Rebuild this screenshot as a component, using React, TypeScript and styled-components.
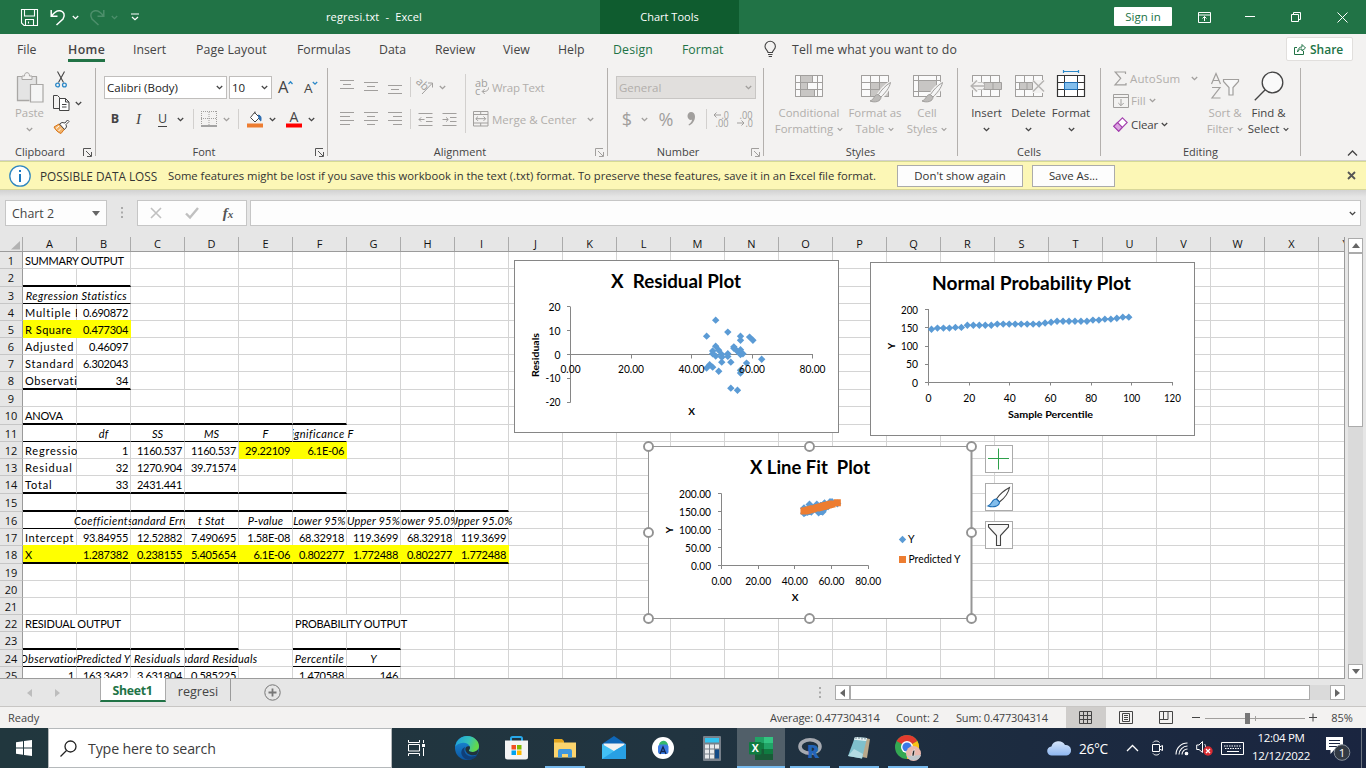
import React from 'react';
import styled, { createGlobalStyle, css } from 'styled-components';

const UI = `'Open Sans', 'Noto Sans', sans-serif`;
const CELL = `'Lato', 'Open Sans', sans-serif`;

const Global = createGlobalStyle`
  html, body { margin: 0; padding: 0; overflow: hidden; }
  * { box-sizing: border-box; }
  svg { display: block; flex: none; overflow: visible; }
`;

const Window = styled.div`
  width: 1366px;
  height: 768px;
  display: flex;
  flex-direction: column;
  background: #e6e6e6;
  font-family: ${UI};
  font-size: 11px;
  color: #444;
  white-space: nowrap;
  overflow: hidden;
  cursor: default;
`;

const Slot = styled.div<{ $w: number; $ml?: number; $h?: number }>`
  width: ${(p) => p.$w}px;
  height: ${(p) => (p.$h ? `${p.$h}px` : 'auto')};
  margin-left: ${(p) => p.$ml ?? 0}px;
  flex: none;
  display: flex;
  align-items: center;
  justify-content: center;
`;

const Spacer = styled.div`
  flex: 1;
`;

/* ---------- title bar ---------- */

const TitleBar = styled.header`
  height: 34px;
  flex: none;
  display: flex;
  background: #217346;
  color: #fff;
`;

const DocTitle = styled.div`
  width: 452px;
  display: flex;
  align-items: center;
  justify-content: center;
  font-size: 11px;
  letter-spacing: 0.15px;
  white-space: pre;
  padding-bottom: 2px;
`;

const ContextTitle = styled.div`
  width: 139px;
  display: flex;
  align-items: center;
  justify-content: center;
  background: #0f5c2f;
  letter-spacing: 0;
  padding-bottom: 2px;
`;

const SignIn = styled.button`
  width: 58px;
  height: 19px;
  margin: 7px 9px 0 0;
  padding: 0;
  border: 0;
  border-radius: 1px;
  background: #fff;
  color: #217346;
  font: 11.5px/19px ${UI};
`;

/* ---------- tabs ---------- */

const TabRow = styled.nav`
  height: 32px;
  flex: none;
  display: flex;
  background: #f3f2f1;
  padding-left: 17px;
  font-size: 12.3px;
`;

const Tab = styled.div<{ $w: number; $ls?: number; $active?: boolean; $green?: boolean }>`
  width: ${(p) => p.$w}px;
  flex: none;
  line-height: 31px;
  letter-spacing: ${(p) => p.$ls ?? 0}px;
  color: ${(p) => (p.$green ? '#217346' : '#444')};
  font-weight: ${(p) => (p.$active ? 600 : 400)};
  span {
    display: inline-block;
    height: 28px;
    border-bottom: ${(p) => (p.$active ? '3px solid #217346' : '0')};
  }
`;

const BulbSlot = styled.div`
  width: 28px;
  padding-top: 7px;
  flex: none;
`;

const ShareButton = styled.div`
  width: 67px;
  height: 24px;
  margin: 3px 13px 0 0;
  display: flex;
  align-items: center;
  gap: 4px;
  padding-left: 7px;
  background: #fff;
  border: 1px solid #e1dfdd;
  border-radius: 2px;
  color: #217346;
  font-size: 12px;
  font-weight: 600;
`;

/* ---------- ribbon ---------- */

const Ribbon = styled.section`
  height: 95px;
  flex: none;
  display: flex;
  background: #f3f2f1;
  border-bottom: 1px solid #d2d0ce;
  padding-top: 2px;
`;

const GroupBox = styled.div<{ $w: number }>`
  width: ${(p) => p.$w}px;
  height: 88px;
  flex: none;
  display: flex;
  flex-direction: column;
  border-right: 1px solid #b3b0ad;
`;

const GroupBody = styled.div`
  height: 76px;
  flex: none;
  display: flex;
`;

const GroupFoot = styled.div`
  height: 16px;
  display: flex;
  align-items: center;
`;

const GroupName = styled.div`
  flex: 1;
  text-align: center;
  line-height: 16px;
`;

const Collapse = styled.div`
  width: 22px;
  margin-left: 40px;
  padding-bottom: 4px;
  display: flex;
  align-items: flex-end;
  justify-content: center;
`;

const Column = styled.div<{ $w?: number; $pt?: number }>`
  display: flex;
  flex-direction: column;
  flex: none;
  width: ${(p) => (p.$w ? `${p.$w}px` : 'auto')};
  padding-top: ${(p) => p.$pt ?? 0}px;
`;

const ToolRow = styled.div<{ $h: number; $pl?: number }>`
  height: ${(p) => p.$h}px;
  padding-left: ${(p) => p.$pl ?? 0}px;
  flex: none;
  display: flex;
  align-items: center;
`;

const BigButton = styled.div<{ $w: number; $off?: boolean; $ml?: number }>`
  width: ${(p) => p.$w}px;
  margin-left: ${(p) => p.$ml ?? 0}px;
  flex: none;
  display: flex;
  flex-direction: column;
  align-items: center;
  padding-top: 2px;
  color: ${(p) => (p.$off ? '#b1aeab' : '#444')};
  font-size: 11.4px;
`;

const BigIcon = styled.div<{ $pt?: number }>`
  height: 35px;
  padding-top: ${(p) => p.$pt ?? 0}px;
  display: flex;
  align-items: flex-start;
`;

const BigLine = styled.div`
  height: 16px;
  line-height: 16px;
  display: flex;
  align-items: center;
  gap: 4px;
`;

const Combo = styled.div<{ $w: number; $off?: boolean }>`
  width: ${(p) => p.$w}px;
  height: 23px;
  flex: none;
  display: flex;
  align-items: center;
  justify-content: space-between;
  padding: 0 3px 1px 2px;
  background: ${(p) => (p.$off ? '#e1dfdd' : '#fff')};
  border: 1px solid ${(p) => (p.$off ? '#c8c6c4' : '#c0bebc')};
  color: ${(p) => (p.$off ? '#b1aeab' : '#222')};
  font-size: 11.5px;
`;

const VRule = styled.div<{ $h: number }>`
  width: 1px;
  height: ${(p) => p.$h}px;
  flex: none;
  background: #d2d0ce;
`;

const Glyph = styled.span<{ $b?: boolean; $i?: boolean; $u?: boolean; $size?: number; $off?: boolean }>`
  font-size: ${(p) => p.$size ?? 13}px;
  line-height: ${(p) => (p.$u ? 14 : 16)}px;
  font-weight: ${(p) => (p.$b ? 700 : 400)};
  font-family: ${(p) => (p.$i ? `'Liberation Serif', serif` : UI)};
  font-style: ${(p) => (p.$i ? 'italic' : 'normal')};
  border-bottom: ${(p) => (p.$u ? '1px solid #444' : '0')};
  color: ${(p) => (p.$off ? '#a19f9d' : '#444')};
`;

const ToolText = styled.span<{ $off?: boolean; $ls?: number; $w?: number }>`
  color: ${(p) => (p.$off ? '#b1aeab' : '#444')};
  font-size: 11.5px;
  letter-spacing: ${(p) => p.$ls ?? 0}px;
  width: ${(p) => (p.$w ? `${p.$w}px` : 'auto')};
  flex: none;
`;

/* ---------- message bar ---------- */

const MessageBar = styled.div`
  height: 29px;
  flex: none;
  display: flex;
  align-items: center;
  background: #fcf7b6;
  border-top: 1px solid #d6da94;
  border-bottom: 1px solid #d8d79a;
  font-size: 11.25px;
  color: #333;
`;

const MessageTitle = styled.div`
  width: 128px;
  margin-left: 8px;
  font-size: 11.8px;
`;

const MessageText = styled.div`
  width: 729px;
`;

const MessageButton = styled.div<{ $w: number }>`
  width: ${(p) => p.$w}px;
  height: 22px;
  margin-right: ${(p) => (p.$w > 100 ? 9 : 0)}px;
  border: 1px solid #ababab;
  background: #fdfdfd;
  text-align: center;
  line-height: 20px;
  font-size: 11.4px;
`;

/* ---------- formula bar ---------- */

const FormulaRow = styled.div`
  height: 47px;
  flex: none;
  display: flex;
  padding: 10px 5px 0;
  background: linear-gradient(#d2d2d2, #e6e6e6 7px);
`;

const NameBox = styled.div`
  width: 102px;
  height: 26px;
  display: flex;
  align-items: center;
  justify-content: space-between;
  padding: 0 6px;
  background: #fdfdfd;
  border: 1px solid #c6c6c6;
  font-size: 12.4px;
`;

const FormulaButtons = styled.div`
  width: 110px;
  height: 26px;
  display: flex;
  align-items: center;
  background: #fdfdfd;
  border: 1px solid #c6c6c6;
`;

const FormulaInput = styled.div`
  width: 1111px;
  height: 26px;
  margin-left: 3px;
  display: flex;
  align-items: center;
  justify-content: flex-end;
  padding-right: 3px;
  background: #fdfdfd;
  border: 1px solid #c6c6c6;
`;

const FxMark = styled.span`
  font: italic 700 15px/20px 'Liberation Serif', serif;
  color: #555;
  small { font-size: 11px; }
`;

/* ---------- sheet ---------- */

const SheetArea = styled.main`
  height: 442px;
  flex: none;
  display: flex;
`;

const GridPane = styled.div`
  position: relative;
  width: 1345px;
  height: 442px;
  flex: none;
  overflow: hidden;
  background: #fff;
  border-right: 1px solid #9b9b9b;
  border-bottom: 1px solid #9b9b9b;
  font-family: ${CELL};
`;

const HeadRow = styled.div`
  height: 15px;
  display: flex;
  background: #e6e6e6;
  border-bottom: 1px solid #9b9b9b;
`;

const Corner = styled.div`
  width: 23px;
  height: 14px;
  flex: none;
  border-right: 1px solid #ababab;
  padding: 4px 0 0 11px;
`;

const ColHead = styled.div`
  width: 54px;
  flex: none;
  border-right: 1px solid #ababab;
  color: #111;
  font: 11px/14px ${UI};
  text-align: center;
`;

const SheetRow = styled.div<{ $h: number }>`
  height: ${(p) => p.$h}px;
  display: flex;
`;

const RowHead = styled.div`
  width: 23px;
  flex: none;
  background: #e6e6e6;
  border-right: 1px solid #9b9b9b;
  border-bottom: 1px solid #c6c6c6;
  color: #111;
  font: 11px/18px ${UI};
  text-align: center;
`;

type Edge = 'thin' | 'thick' | undefined;
const CellBox = styled.div<{
  $span: number; $align: string; $edge: Edge; $fill?: boolean; $bleedUp?: boolean; $it?: boolean; $open?: string; $ls: number;
}>`
  width: ${(p) => p.$span * 54}px;
  flex: none;
  display: flex;
  justify-content: ${(p) => p.$align};
  padding: 0 2px;
  border-right: 1px solid ${(p) => (p.$fill ? '#ff0' : p.$open === 'right' ? 'transparent' : '#d4d4d4')};
  border-bottom: ${(p) =>
    p.$edge === 'thick' ? '2px solid #000' : p.$edge === 'thin' ? '1px solid #000' : p.$fill ? '1px solid #ff0' : '1px solid #d4d4d4'};
  background: ${(p) => (p.$fill ? '#ff0' : 'transparent')};
  ${(p) => p.$fill && p.$bleedUp && css`box-shadow: 0 -1px 0 #ff0;`}
  color: #000;
  font-size: 11px;
  line-height: 18px;
  font-style: ${(p) => (p.$it ? 'italic' : 'normal')};
  letter-spacing: ${(p) => p.$ls}px;
  clip-path: inset(-1px ${(p) => (p.$open === 'right' ? '-40px' : '0')} 0 ${(p) => (p.$open === 'left' ? '-40px' : '0')});
`;

const VScroll = styled.div`
  width: 15px;
  height: 442px;
  margin-left: 3px;
  padding-top: 1px;
  display: flex;
  flex-direction: column;
`;

const ScrollButton = styled.div`
  width: 15px;
  height: 15px;
  flex: none;
  display: flex;
  align-items: center;
  justify-content: center;
  background: #fff;
  border: 1px solid #ababab;
`;

const VThumb = styled.div`
  height: 174px;
  background: #fff;
  border: 1px solid #ababab;
`;

const Track = styled.div`
  flex: 1;
  background: #dadada;
`;

/* Charts float freely over the cells, as in any spreadsheet. */
const ChartFrame = styled.div<{ $x: number; $y: number }>`
  position: absolute;
  left: ${(p) => p.$x}px;
  top: ${(p) => p.$y}px;
`;

const ChartLabel = styled.text`
  font-family: ${CELL};
  fill: #000;
  white-space: pre;
`;

const ChartButtons = styled.div`
  position: absolute;
  left: 985px;
  top: 208px;
  display: flex;
  flex-direction: column;
  gap: 10px;
`;

const ChartButton = styled.div`
  width: 28px;
  height: 28px;
  display: flex;
  align-items: center;
  justify-content: center;
  background: #fff;
  border: 1px solid #ababab;
`;

/* ---------- sheet tabs ---------- */

const SheetTabs = styled.div`
  height: 27px;
  flex: none;
  display: flex;
  background: #e6e6e6;
  font-size: 12px;
`;

const ActiveSheet = styled.div`
  width: 66px;
  height: 24px;
  margin-top: -1px;
  position: relative;
  background: #fff;
  border: 1px solid #ababab;
  border-top: 0;
  border-bottom: 2px solid #217346;
  color: #217346;
  font-weight: 700;
  font-size: 12.3px;
  letter-spacing: -0.3px;
  text-align: center;
  line-height: 26px;
  padding-right: 1px;
`;

const OtherSheet = styled.div`
  width: 65px;
  height: 22px;
  border-right: 1px solid #9b9b9b;
  text-align: center;
  font-size: 12.6px;
  line-height: 25px;
`;

const HScroll = styled.div`
  display: flex;
  width: 510px;
  height: 15px;
  margin: 6px 21px 0 0;
`;

const HThumb = styled.div`
  width: 460px;
  background: #fff;
  border: 1px solid #ababab;
`;

/* ---------- status bar ---------- */

const StatusBar = styled.footer`
  height: 22px;
  flex: none;
  display: flex;
  align-items: center;
  background: #f3f2f1;
  border-top: 1px solid #c8c6c4;
  font-size: 11px;
`;

const StatusText = styled.div<{ $w: number; $ml?: number; $ls?: number }>`
  width: ${(p) => p.$w}px;
  margin-left: ${(p) => p.$ml ?? 0}px;
  flex: none;
  letter-spacing: ${(p) => p.$ls ?? -0.17}px;
`;

const ViewButton = styled.div<{ $on?: boolean }>`
  width: 40px;
  height: 21px;
  display: flex;
  align-items: center;
  justify-content: center;
  background: ${(p) => (p.$on ? '#cfcdcb' : 'transparent')};
`;

/* ---------- taskbar ---------- */

const Taskbar = styled.div`
  height: 40px;
  flex: none;
  display: flex;
  background: linear-gradient(90deg, #21373e 0%, #213440 50%, #1c2b40 75%, #1a2540 100%);
  color: #fff;
`;

const SearchBox = styled.div`
  width: 344px;
  height: 40px;
  display: flex;
  align-items: center;
  gap: 11px;
  padding-left: 11px;
  background: #fff;
  border: 1px solid #b5b9bb;
  color: #3c3c3c;
  font-size: 14.2px;
  letter-spacing: -0.15px;
`;

const TaskSlot = styled.div<{ $w: number; $open?: boolean; $active?: boolean }>`
  width: ${(p) => p.$w}px;
  height: 40px;
  flex: none;
  display: flex;
  align-items: center;
  justify-content: center;
  background: ${(p) => (p.$active ? '#515f69' : 'transparent')};
  box-shadow: ${(p) => (p.$active ? 'inset 0 -2px #76b9ed' : 'none')};
  ${(p) =>
    p.$open &&
    css`
      background: linear-gradient(#76b9ed, #76b9ed) center bottom / 40px 2px no-repeat;
    `}
`;

const Clock = styled.div`
  width: 62px;
  display: flex;
  flex-direction: column;
  align-items: center;
  font-size: 11.5px;
  line-height: 18px;
  padding-top: 1px;
  letter-spacing: -0.3px;
`;

const Temp = styled.div`
  width: 40px;
  margin-left: 8px;
  align-self: center;
  font-size: 13.7px;
  letter-spacing: -0.3px;
`;

/* ---------- icons ---------- */

const Chevron = ({ c = '#444', s = 7 }: { c?: string; s?: number }) => (
  <svg width={s} height={5} viewBox="0 0 7 5" fill="none" stroke={c} strokeWidth="1.3">
    <path d="M.8 1l2.7 2.6L6.2 1" />
  </svg>
);
const OFF = '#a19f9d';

const Launcher = ({ off }: { off?: boolean }) => (
  <svg width="9" height="9" fill="none" stroke={off ? OFF : '#555'}>
    <path d="M.5 8V.5H8M3 3l5 5M8.500 4v4.500H4" />
  </svg>
);

const SaveIcon = () => (
  <svg width="17" height="17" fill="none" stroke="#fff" strokeWidth="1.1">
    <path d="M.5.5h16v16H3l-2.500-2.500zM3.500.5v6.500h10V.5M4.500 16.500v-6h8v6M7.500 12.500v2" />
  </svg>
);
const UndoIcon = ({ c = '#fff', flip }: { c?: string; flip?: boolean }) => (
  <svg width="16" height="17" fill="none" stroke={c} strokeWidth="1.5">
    <path transform={flip ? 'matrix(-1 0 0 1 16 0)' : undefined} d="M1.200 1v6.300h6.300M1.500 7C4 3.500 7 1.200 10 1.700c4 .6 5.500 5 3 8.300L6.500 16" />
  </svg>
);

const PasteIcon = () => (
  <svg width="28" height="31" fill="none" stroke="#a9a7a5">
    <path d="M2 5h18v23H2z" fill="#e4e4e4" stroke="none" />
    <path d="M1.500 4.500v24h12M20.500 4.500V12" strokeWidth="1.300" />
    <path d="M1 4.500h5.500M15.500 4.500h5.500" />
    <path d="M6 7.500V4h2.500C8.500 1.500 9.500.7 11 .7s2.500.8 2.500 3.300H16v3.500z" fill="#f3f2f1" />
    <path d="M14.500 12.500h12.500v17.500h-12.500z" fill="#f5f5f5" strokeWidth="1.200" />
  </svg>
);
const CutIcon = () => (
  <svg width="12" height="17" fill="none" stroke="#444" strokeWidth="1.1">
    <path d="M2.500.5l6 11M9.500.5l-6 11" />
    <circle cx="2.600" cy="14" r="1.900" stroke="#2b88c8" strokeWidth="1.300" />
    <circle cx="9.400" cy="14" r="1.900" stroke="#2b88c8" strokeWidth="1.300" />
  </svg>
);
const CopyIcon = () => (
  <svg width="17" height="16" fill="#fff" stroke="#444">
    <path d="M.5.5h4l2 2v11h-6z" fill="#f3f2f1" />
    <path d="M6.500 3.500h6l3.500 3.500v8.500H6.500zM12.500 3.500V7H16M9 9.500h4.500M9 12h4.500" />
  </svg>
);
const PainterIcon = () => (
  <svg width="17" height="16" fill="none" stroke="#444">
    <path d="M1 8l5-3 5.500 5L8 14.500C5 13.500 2.500 11 1 8z" fill="#f2b36b" stroke="#d8761a" />
    <path d="M3 9.500L6 7M5.500 12L8 9.500" stroke="#fff" />
    <path d="M6.500 5L9 3.500l3 .5 2.500-3 1.500 1.500-3 3 .5 2.500-2 2.500z" fill="#fff" />
  </svg>
);

const GrowFont = ({ down }: { down?: boolean }) => (
  <svg width="16" height="16">
    <text x={down ? 1 : 0} y={13} fontFamily="Open Sans" fontSize={down ? 13.5 : 16.5} fill="#444">A</text>
    <path d={down ? 'M9.800 2l2.200 2.200L14.200 2' : 'M10.500 4l2-2.200L14.500 4'} fill="none" stroke="#2b88c8" strokeWidth="1.300" />
  </svg>
);
const BordersIcon = () => (
  <svg width="16" height="16" fill="none" stroke={OFF}>
    <path d="M.5 0v14M8 1v13M15.500 0v14M0 .5h16M0 7.500h16" strokeDasharray="1 1" />
    <path d="M0 15h16" strokeWidth="1.500" stroke="#888" />
  </svg>
);
const FillIcon = () => (
  <svg width="16" height="17" fill="none" stroke="#444">
    <path d="M7.500 1.500l5 5-4.500 4.500-4.500-4.500zM8 3V.5" fill="#fff" />
    <path d="M11.500 4c2.500.5 3 2.500 2.300 6-1.500-1-2-3-2.300-6z" fill="#2b6cb0" stroke="#2b6cb0" />
    <path d="M0 12.500h16v4H0z" fill="#ed7d31" stroke="none" />
  </svg>
);
const FontColorIcon = () => (
  <svg width="16" height="18">
    <text x="3.500" y="11.500" fontFamily="Open Sans" fontSize="14" fill="#444">A</text>
    <path d="M0 13.500h16v4H0z" fill="#f00" />
  </svg>
);

const Lines = ({ rows }: { rows: [number, number, number][] }) => (
  <svg width="15" height="14" stroke={OFF}>
    {rows.map(([x1, x2, y]) => (
      <path key={y} d={`M${x1} ${y + 0.5}H${x2}`} />
    ))}
  </svg>
);
const OrientIcon = () => (
  <svg width="16" height="16" fill="none" stroke={OFF}>
    <text x="-1" y="8" fontFamily="Open Sans" fontSize="11" fill={OFF} stroke="none" transform="rotate(45 4 6) translate(-1 0)">ab</text>
    <path d="M5 15L15 4.500M11 4h4.500v4.500" />
  </svg>
);
const IndentIcon = ({ right }: { right?: boolean }) => (
  <svg width="15" height="14" fill="none" stroke={OFF}>
    <path d="M.5 1.500h14M8 5.500h6.500M8 9.500h6.500M.5 13.500h14" />
    <path d={right ? 'M.5 7.500h5.500M4 5.300l2.300 2.200L4 9.700' : 'M1 7.500h5.500M3.200 5.300L1 7.500l2.200 2.200'} />
  </svg>
);
const WrapIcon = () => (
  <svg width="15" height="17" fill="none" stroke={OFF}>
    <text x="0" y="8" fontFamily="Open Sans" fontSize="11" fill={OFF} stroke="none">ab</text>
    <text x="0" y="15.500" fontFamily="Open Sans" fontSize="11" fill={OFF} stroke="none">c</text>
    <path d="M13.500 8.500c0 3-1.500 4-6 4M9.700 10l-2.500 2.500L9.700 15" />
  </svg>
);
const MergeIcon = () => (
  <svg width="16" height="16" fill="none" stroke={OFF}>
    <path d="M.5.5h14.500v14.500H.5zM.5 3.500h14.500M.5 12h14.500M7.700.5v3M7.700 12v3M3 7.700h9.500M5 5.500L2.800 7.700 5 9.900M10.500 5.500l2.200 2.200-2.200 2.200" />
  </svg>
);
const DecimalIcon = ({ dec }: { dec?: boolean }) => (
  <svg width="17" height="16" fill="none" stroke={OFF}>
    <text x={dec ? 2.5 : 8.5} y="7.500" fontFamily="Open Sans" fontSize="10" fill={OFF} stroke="none" textLength={dec ? 13 : 7.5} lengthAdjust="spacingAndGlyphs">{dec ? '.00' : '.0'}</text>
    <text x={dec ? 8.5 : 2.5} y="15.500" fontFamily="Open Sans" fontSize="10" fill={OFF} stroke="none" textLength={dec ? 7.5 : 13} lengthAdjust="spacingAndGlyphs">{dec ? '.0' : '.00'}</text>
    <path d={dec ? 'M0 12h7M4.500 9.500L7 12l-2.500 2.500' : 'M1 4h7M3.500 1.500L1 4l2.500 2.500'} />
  </svg>
);

const GRID_D = 'M.5 .5h27v21H.5zM.5 7.500h27M.5 14.500h27M5.500 .5v21M22.500 .5v21';
const CondIcon = () => (
  <svg width="28" height="27" fill="none" stroke={OFF}>
    <path d="M.5 5.500h27v21H.5z" fill="#fafafa" />
    <path d="M5.500 5.500h12v7h-12zM5.500 12.500h7v7h-7zM5.500 19.500h14v7h-14z" fill="#c8c6c4" />
    <path transform="translate(0 5)" d={GRID_D} />
  </svg>
);
const BrushTableIcon = ({ cell }: { cell?: boolean }) => (
  <svg width="28" height="33" fill="none" stroke={OFF}>
    <path d="M.5 5.500h27v21H.5z" fill="#fafafa" />
    <path d={cell ? 'M5.500 10.500h18v11h-18z' : 'M9.500 12.500h18v14h-18z'} fill="#c8c6c4" />
    <path d={cell ? 'M.5 5.500h27v21H.5zM.5 10.500h27M.5 21.500h27M5.500 5.500v21M23.500 5.500v21' : 'M.5 5.500h27v21H.5zM.5 12.500h27M.5 19.500h27M9.500 5.500v21M18.500 5.500v21'} />
    <path d="M30 12c-5 3-10 8-13 13l3 3c4-4 9-10 10-16z" fill="#fff" stroke="#f3f2f1" strokeWidth="3" />
    <path d="M29.500 12.500c-5 3-9 7.500-12 12l2.500 2.500c4-4 8.500-9 9.500-14.500z" fill="#f5f5f5" />
    <path d="M17 24.500c-4 0-3.500 5-8 6.500 5 2 11 .5 11-4z" fill="#bdbbb9" />
  </svg>
);
const InsertIcon = () => (
  <svg width="33" height="27" fill="none" stroke={OFF}>
    <path d="M2.500 5.500h27v21h-27z" fill="#fafafa" />
    <path transform="translate(2 5)" d="M.5 .5h27v21H.5zM.5 7.500h27M.5 14.500h27M9.500 .5v21M18.500 .5v21" />
    <path d="M0 12.500h14v7H0z" fill="#f3f2f1" stroke="none" />
    <path d="M14 12.500h17.500v7H14zM23 12.500v7" fill="#c8c6c4" />
    <path d="M1 16h13M7 10.500L1.200 16l5.800 5.500" stroke="#f3f2f1" strokeWidth="4" />
    <path d="M1 16h13M7 10.500L1.200 16l5.800 5.500" stroke="#b5b3b1" strokeWidth="1.500" />
  </svg>
);
const DeleteIcon = () => (
  <svg width="28" height="27" fill="none" stroke={OFF}>
    <path d="M.5 5.500h27v21H.5z" fill="#fafafa" />
    <path transform="translate(0 5)" d="M.5 .5h27v21H.5zM.5 7.500h27M.5 14.500h27M9.500 .5v21M18.500 .5v21" />
    <path d="M17 10h12v13H17z" fill="#f3f2f1" stroke="none" />
    <path d="M4.500 12.500h13v7h-13zM12 12.500v7" fill="#c8c6c4" />
    <path d="M18 10.500l11 11M29 10.500l-11 11" stroke="#b5b3b1" strokeWidth="1.500" />
  </svg>
);
const FormatIcon = () => (
  <svg width="28" height="28" fill="none" stroke="#333">
    <path d="M.5 5.500h27v21H.5z" fill="#fff" strokeWidth="1.200" />
    <path d="M.5 12.500h27M.5 19.500h27M7.500 5.500v21M20.500 5.500v21" />
    <path d="M7.500 12.500h13v7h-13z" fill="#83beec" stroke="#1f6fb5" />
    <path d="M6.500 1.500h15M6.500 0v3M21.500 0v3" stroke="#2b88c8" strokeWidth="1.200" />
  </svg>
);
const SigmaIcon = () => (
  <svg width="13" height="15" fill="none" stroke={OFF} strokeWidth="1.200">
    <path d="M11.500 3V1H1.200l5.500 6.300L1 13.800h11V12" />
  </svg>
);
const FillDownIcon = () => (
  <svg width="16" height="14" fill="none" stroke={OFF}>
    <path d="M.5.5h15v13H.5zM.5 3.500h15M8 5v6.500M5.300 9L8 11.700 10.700 9" />
  </svg>
);
const EraserIcon = () => (
  <svg width="15" height="15" fill="#fff" stroke="#a33fae" strokeWidth="1.100">
    <path d="M9.500.8l4.700 4.700-8.500 8.700L.8 9.300z" />
    <path d="M4.500 5.500l4.800 4.800-3.600 3.900L.8 9.300z" fill="#dba3e0" />
  </svg>
);
const SortIcon = () => (
  <svg width="30" height="32" fill="none" stroke={OFF} strokeWidth="1.200">
    <path d="M1.500 14L6 3.500 10.500 14M3 10.500h6M2 17.500h8l-8 10.500h8.500" />
    <path d="M13.500 9.500h15v2L23 17.500v7.500h-4v-7.500l-5.500-6z" fill="#f8f8f8" />
  </svg>
);
const FindIcon = () => (
  <svg width="31" height="31" fill="#fafafa" stroke="#444" strokeWidth="1.300">
    <circle cx="19.500" cy="12.500" r="10.300" />
    <path d="M12.200 19.800L1.800 30.300" />
  </svg>
);

/* ---------- charts ---------- */

const POINTS: [number, number][] = [
  [48, 14.4], [45, 7.7], [52, 9.4], [56.2, 7.7], [56.2, 6], [59.2, 7.3], [60.3, 6], [48, 3.5], [54, 3.2], [54, 2.6],
  [47, 1.5], [47, 0.3], [48, -0.6], [49, 1.8], [50, 0], [50, -1.2], [50, -3.2], [52, 0.3], [52, -0.8], [53, -3.2],
  [55, 1.6], [55.6, 0.8], [56.2, 2], [56.2, 0], [57, 0.3], [63.2, -2], [58.2, -3.6], [46, -4.3], [45, -5.7],
  [47, -5.3], [49, -7], [56.2, -6.6], [56.2, -7.8], [53, -14.1], [55.2, -15],
];
const NORMAL = [
  146, 149, 149, 149, 151, 151, 157, 157, 157, 157, 157, 160, 160, 160, 160, 160, 160, 160, 160, 163, 165, 168, 168,
  168, 168, 168, 168, 171, 171, 173.5, 173.5, 176, 179, 179,
];
const BLUE = '#5b9bd5';
const AXIS = '#868686';

const diamond = (x: number, y: number, r = 3.7) => `M${x} ${y - r}l${r} ${r}l${-r} ${r}l${-r} ${-r}z`;

const ChartText = ({ x, y, w, children, bold, size = 10.5, anchor = 'middle' }: {
  x: number; y: number; w?: number; children: string; bold?: boolean; size?: number; anchor?: 'middle' | 'end' | 'start';
}) => (
  <ChartLabel x={x} y={y} textAnchor={anchor} textLength={w} lengthAdjust="spacingAndGlyphs" fontSize={size} fontWeight={bold ? 700 : 400}>
    {children}
  </ChartLabel>
);

const ResidualChart = () => {
  const X = (v: number) => 56.5 + v * 3.025;
  const Y = (v: number) => 94.5 - v * 2.385;
  return (
    <svg width="325" height="173">
      <rect x=".5" y=".5" width="324" height="172" fill="#fff" stroke={AXIS} />
      <ChartText x={162} y={28} w={130} bold size={18}>X  Residual Plot</ChartText>
      <g stroke={AXIS}>
        <path d="M56.500 47v95.500" />
        {[20, 10, 0, -10, -20].map((v) => <path key={v} d={`M53 ${Math.floor(Y(v)) + 0.5}h3.500`} />)}
        <path d="M56.500 94.500H299" />
        {[20, 40, 60, 80].map((v) => <path key={v} d={`M${Math.floor(X(v)) + 0.5} 94.500v4`} />)}
      </g>
      <path fill={BLUE} d={POINTS.map(([a, b]) => diamond(X(a), Y(b))).join('')} />
      {[[20, 12], [10, 12], [0, 6], [-10, 15], [-20, 15]].map(([v, w]) => (
        <ChartText key={v} x={46.5} y={Y(v) + 4} w={w} anchor="end">{String(v)}</ChartText>
      ))}
      {[0, 20, 40, 60, 80].map((v) => (
        <ChartText key={v} x={X(v)} y={113} w={v ? 26 : 20}>{v.toFixed(2)}</ChartText>
      ))}
      <ChartText x={177.5} y={155} bold size={10}>X</ChartText>
      <g transform="translate(25 95) rotate(-90)">
        <ChartText x={0} y={0} w={44} bold size={10}>Residuals</ChartText>
      </g>
    </svg>
  );
};

const NormalChart = () => {
  const X = (v: number) => 58.5 + v * 2.033;
  const Y = (v: number) => 120.5 - v * 0.365;
  return (
    <svg width="325" height="174">
      <rect x=".5" y=".5" width="324" height="173" fill="#fff" stroke={AXIS} />
      <ChartText x={161.5} y={28} w={199} bold size={18}>Normal Probability Plot</ChartText>
      <g stroke={AXIS}>
        <path d="M58.500 47v73.500H303" fill="none" />
        {[0, 50, 100, 150, 200].map((v) => <path key={v} d={`M55 ${Math.floor(Y(v)) + 0.5}h3.500`} />)}
        {[0, 20, 40, 60, 80, 100, 120].map((v) => <path key={v} d={`M${Math.floor(X(v)) + 0.5} 120.500v3`} />)}
      </g>
      <path fill={BLUE} d={NORMAL.map((n, i) => diamond(X(1.47 + i * 2.941), Y(n))).join('')} />
      {[[0, 6], [50, 12], [100, 17], [150, 17], [200, 17]].map(([v, w]) => (
        <ChartText key={v} x={48} y={Y(v) + 4} w={w} anchor="end">{String(v)}</ChartText>
      ))}
      {[[0, 6], [20, 12], [40, 12], [60, 12], [80, 12], [100, 17], [120, 17]].map(([v, w]) => (
        <ChartText key={v} x={X(v)} y={139.5} w={w}>{String(v)}</ChartText>
      ))}
      <ChartText x={180.5} y={156} w={85} bold size={10}>Sample Percentile</ChartText>
      <g transform="translate(24.500 84) rotate(-90)">
        <ChartText x={0} y={0} bold size={10}>Y</ChartText>
      </g>
    </svg>
  );
};

const LineFitChart = () => {
  const X = (v: number) => 73.5 + v * 1.833;
  const Y = (v: number) => 119.5 - v * 0.3583;
  const fit = (v: number) => 93.85 + 1.287 * v;
  return (
    <svg width="333" height="182">
      <g transform="translate(4 4)">
        <rect x=".5" y=".5" width="323" height="172" fill="#fff" stroke="#969696" />
        <path d="M323.500 0v173" stroke="#969696" strokeWidth="2" />
        <ChartText x={162} y={28} w={120} bold size={18}>X Line Fit  Plot</ChartText>
        <g stroke={AXIS}>
          <path d="M73.500 47.500v72H220.500" fill="none" />
          {[0, 50, 100, 150, 200].map((v) => <path key={v} d={`M70 ${Math.floor(Y(v)) + 0.5}h3.500`} />)}
          {[0, 20, 40, 60, 80].map((v) => <path key={v} d={`M${Math.floor(X(v)) + 0.5} 119.500v3.500`} />)}
        </g>
        <path fill={BLUE} d={POINTS.map(([a, b]) => diamond(X(a), Y(fit(a) + b), 4)).join('')} />
        <path fill="#ed7d31" d={POINTS.map(([a]) => `M${X(a) - 3.5} ${Y(fit(a)) - 3.5}h7v7h-7z`).join('')} />
        {[[0, 20], [50, 26], [100, 32], [150, 32], [200, 32]].map(([v, w]) => (
          <ChartText key={v} x={63} y={Y(v) + 4} w={w} anchor="end">{v.toFixed(2)}</ChartText>
        ))}
        {[0, 20, 40, 60, 80].map((v) => (
          <ChartText key={v} x={X(v)} y={138.5} w={v ? 26 : 20}>{v.toFixed(2)}</ChartText>
        ))}
        <ChartText x={147} y={155} bold size={10}>X</ChartText>
        <g transform="translate(24.500 84) rotate(-90)">
          <ChartText x={0} y={0} bold size={10}>Y</ChartText>
        </g>
        <path fill={BLUE} d={diamond(254.5, 93.5, 3.7)} />
        <ChartText x={260} y={97} anchor="start">Y</ChartText>
        <path fill="#ed7d31" d="M251 110h7v7h-7z" />
        <ChartText x={260.5} y={117} w={52} anchor="start">Predicted Y</ChartText>
        {[[0.5, 0.5], [161.5, 0.5], [323.5, 0.5], [0.5, 86.5], [323.5, 86.5], [0.5, 172.5], [161.5, 172.5], [323.5, 172.5]].map(
          ([x, y]) => <circle key={`${x}-${y}`} cx={x} cy={y} r="4.500" fill="#fff" stroke="#929292" strokeWidth="1.900" />,
        )}
      </g>
    </svg>
  );
};

/* ---------- sheet data ---------- */

interface CellDef {
  t?: string;
  span?: number;
  al?: 'l' | 'r' | 'c';
  it?: boolean;
  fill?: boolean;
  open?: 'left' | 'right';
  ls?: number;
}
interface RowDef {
  h?: number;
  cells?: CellDef[];
  edge?: Edge;
  edgeCols?: [number, number][];
  up?: boolean;
}
const L = (t: string, o: Partial<CellDef> = {}): CellDef => ({ t, al: 'l', ...o });
const R = (t: string, o: Partial<CellDef> = {}): CellDef => ({ t, al: 'r', ...o });
const C = (t: string, o: Partial<CellDef> = {}): CellDef => ({ t, al: 'c', it: true, ...o });
const E: CellDef = {};
const Y = { fill: true };

const ROWS: RowDef[] = [
  { cells: [L('SUMMARY OUTPUT', { span: 2, ls: -0.26 })] },
  { h: 18, edge: 'thick', edgeCols: [[0, 2]] },
  { cells: [C('Regression Statistics', { span: 2, ls: 0.43 })], edge: 'thin', edgeCols: [[0, 2]] },
  { cells: [L('Multiple  R', { ls: 0.8 }), R('0.690872')] },
  { cells: [L('R Square', { ...Y, ls: 0.5 }), R('0.477304', Y)], up: true },
  { cells: [L('Adjusted R', { ls: 0.78 }), R('0.46097')] },
  { cells: [L('Standard E', { ls: 0.8 }), R('6.302043')] },
  { h: 18, cells: [L('Observations', { ls: 0.6 }), R('34')], edge: 'thick', edgeCols: [[0, 2]] },
  {},
  { h: 18, cells: [L('ANOVA', { ls: -0.2 })], edge: 'thick', edgeCols: [[0, 6]] },
  { cells: [E, C('df'), C('SS'), C('MS'), C('F'), C('Significance F', { open: 'right', ls: 0.42 })], edge: 'thin', edgeCols: [[0, 6]] },
  { cells: [L('Regression', { ls: 0.78 }), R('1'), R('1160.537'), R('1160.537'), R('29.22109', Y), R('6.1E-06', Y)] },
  { cells: [L('Residual', { ls: 0.95 }), R('32'), R('1270.904'), R('39.71574')] },
  { h: 18, cells: [L('Total', { ls: 0.8 }), R('33'), R('2431.441')], edge: 'thick', edgeCols: [[0, 6]] },
  { h: 18, edge: 'thick', edgeCols: [[0, 9]] },
  {
    cells: [
      E, C('Coefficients', { open: 'left', ls: 0.4 }), C('Standard Error', { ls: 0.35 }), C('t Stat', { ls: 0.3 }), C('P-value', { ls: 0.2 }),
      C('Lower 95%', { ls: 0.2 }), C('Upper 95%', { ls: 0.2 }), C('Lower 95.0%', { ls: 0.25 }), C('Upper 95.0%', { open: 'right', ls: 0.15 }),
    ],
    edge: 'thin', edgeCols: [[0, 9]],
  },
  { cells: [L('Intercept', { ls: 0.6 }), ...['93.84955', '12.52882', '7.490695', '1.58E-08', '68.32918', '119.3699', '68.32918', '119.3699'].map((t) => R(t))] },
  {
    h: 18, up: true, edge: 'thick', edgeCols: [[0, 9]],
    cells: [L('X', Y), ...['1.287382', '0.238155', '5.405654', '6.1E-06', '0.802277', '1.772488', '0.802277', '1.772488'].map((t) => R(t, Y))],
  },
  {}, {}, {},
  { cells: [L('RESIDUAL OUTPUT', { span: 2, ls: -0.2 }), E, E, E, L('PROBABILITY OUTPUT', { span: 3, ls: -0.22 })] },
  { h: 18, edge: 'thick', edgeCols: [[0, 4], [5, 7]] },
  {
    cells: [
      C('Observation', { ls: 0.35 }), C('Predicted Y', { ls: 0.2 }), C('Residuals', { ls: 0.5 }), C('Standard Residuals', { open: 'right', ls: 0.3 }),
      E, C('Percentile', { ls: 0.45 }), C('Y'),
    ],
    edge: 'thin', edgeCols: [[0, 4], [5, 7]],
  },
  { cells: [R('1'), R('163.3682'), R('3.631804'), R('0.585225'), E, R('1.470588'), R('146')] },
];

const ALIGN = { l: 'flex-start', r: 'flex-end', c: 'center' };

const GridRow = ({ row, n }: { row: RowDef; n: number }) => {
  const h = row.h ?? 17;
  const out: React.ReactNode[] = [];
  let col = 0;
  let i = 0;
  while (col < 25) {
    const c = row.cells?.[i] ?? E;
    const at = col;
    const edged = row.edgeCols?.some(([a, b]) => at >= a && at < b);
    out.push(
      <CellBox
        key={col} $span={c.span ?? 1} $align={ALIGN[c.al ?? 'l']} $edge={edged ? row.edge : undefined}
        $fill={c.fill} $bleedUp={row.up} $it={c.it} $open={c.open} $ls={c.ls ?? (c.al === 'r' ? -0.28 : 0)}
      >
        {c.t}
      </CellBox>,
    );
    col += c.span ?? 1;
    i += 1;
  }
  return (
    <SheetRow $h={h}>
      <RowHead>{n}</RowHead>
      {out}
    </SheetRow>
  );
};

/* ---------- taskbar icons ---------- */

const WinIcon = () => (
  <svg width="16" height="16" fill="#fff">
    <path d="M0 2.300L7 1.300v6.200H0zM8 1.100L16 0v7.500H8zM0 8.500h7v6.200l-7-1zM8 8.500h8V16l-8-1.100z" />
  </svg>
);
const TaskViewIcon = () => (
  <svg width="17" height="16" fill="none" stroke="#fff">
    <path d="M.5 0v2.500h11V0M.5 16v-2.500h11V16M.5 4.500h11v6.500H.5zM15.500 0v3M15.500 8v8" />
    <path d="M14 4h3v3h-3z" fill="#fff" stroke="none" />
  </svg>
);
const EdgeIcon = () => (
  <svg width="24" height="24" viewBox="0 0 24 24">
    <defs>
      <linearGradient id="edA" x1="0" y1="0" x2="1" y2="0.3"><stop offset="0" stopColor="#1b9de2" /><stop offset=".6" stopColor="#35c1b9" /><stop offset="1" stopColor="#63d94a" /></linearGradient>
      <linearGradient id="edB" x1="0" y1="0" x2="0" y2="1"><stop offset="0" stopColor="#1b8fdc" /><stop offset="1" stopColor="#0c55a0" /></linearGradient>
    </defs>
    <circle cx="12" cy="12" r="12" fill="url(#edB)" />
    <path d="M.3 10.500C1.500 4 6.500 0 12 0c7 0 12 5 12 10 0 4-3 6-6.500 6-2.500 0-4-1-3.500-2 .8-1 1.200-2 .8-3.500C14 8 11 6.500 8 6.700 4.500 7 1.500 8.500.3 10.500z" fill="url(#edA)" />
    <path d="M10 11c-2 4 1 9.500 6.500 9.500 2.500 0 4.500-.8 6-2l-1.500 2.500C17 24.500 12 24.500 9 22c-4-3.500-3.500-9 1-11z" fill="#103f78" />
    <path d="M14.800 10.500c.4 1.500 0 2.500-.8 3.500-.5 1 1 2 3.500 2 2.500 0 5-1.200 6-3.500-.3 3-1 5-1.500 6-4 1.800-10 .5-11.500-4-.8-3 1.500-5 4.300-4z" fill="#21333c" />
  </svg>
);
const StoreIcon = () => (
  <svg width="23" height="24">
    <path d="M6 6V2.500C6 1.500 6.500 1 7.500 1h8c1 0 1.500.5 1.500 1.500V6" fill="none" stroke="#28a8ea" strokeWidth="2" />
    <path d="M0 4.500h23v16.500q0 2.500-2.500 2.500h-18Q0 23.500 0 21z" fill="#f4f4f4" />
    <path d="M6.500 9h4.500v4.500H6.500z" fill="#f25022" /><path d="M12 9h4.500v4.500H12z" fill="#7fba00" />
    <path d="M6.500 14.500h4.500V19H6.500z" fill="#00a4ef" /><path d="M12 14.500h4.500V19H12z" fill="#ffb900" />
  </svg>
);
const FolderIcon = () => (
  <svg width="22" height="19">
    <path d="M0 0h8l2 2v4H0z" fill="#e2a41f" /><path d="M0 3.500h22v15H0z" fill="#fbd46d" />
    <path d="M4 18.500v-6.500q0-2 2-2h10q2 0 2 2v6.500h-4v-3.500H8v3.500z" fill="#3f97dc" />
  </svg>
);
const MailIcon = () => (
  <svg width="24" height="24">
    <path d="M0 8L12 0l12 8v2H0z" fill="#0f67b8" /><path d="M1.500 7.500h21v8h-21z" fill="#f2f2f2" />
    <path d="M0 8l12 7L24 8v15H0z" fill="#42c0f4" /><path d="M0 23L15 13.300 24 8v15z" fill="#28a0e4" />
  </svg>
);
const StudioIcon = () => (
  <svg width="22" height="22">
    <circle cx="11" cy="11" r="11" fill="#fff" />
    <path d="M7 8.500a4.500 4.500 0 0 1 9-.5v2H7z" fill="#33b96c" />
    <rect x="6" y="7.500" width="10.500" height="9.500" rx="2.500" fill="#3b7ce2" />
    <path d="M8 17l3-7 3 7M9 14.500h4" fill="none" stroke="#12264f" strokeWidth="1.300" />
  </svg>
);
const CalcIcon = () => (
  <svg width="18" height="25">
    <rect width="18" height="25" rx="1" fill="#77808a" /><path d="M2 2h14v4.500H2z" fill="#33c3ef" />
    <g fill="#e8eaec">{[8.5, 13.5, 18.5].map((y) => [2, 7].map((x) => <path key={`${x}${y}`} d={`M${x} ${y}h4v4h-4z`} />))}<path d="M12 8.500h4v4h-4z" /></g>
    <path d="M12 13.500h4v9h-4z" fill="#124a86" />
  </svg>
);
const ExcelIcon = () => (
  <svg width="24" height="23">
    <path d="M6 0h9v6H6z" fill="#21a366" /><path d="M15 0h9v6h-9z" fill="#33c481" /><path d="M6 6h9v6H6z" fill="#107c41" />
    <path d="M15 6h9v6h-9z" fill="#21a366" /><path d="M6 12h18v11H6z" fill="#185c37" /><path d="M15 12h9v5h-9z" fill="#107c41" />
    <rect y="5" width="12.500" height="12.500" rx="1" fill="#107c41" />
    <text x="6.200" y="15" textAnchor="middle" fontFamily="Open Sans" fontWeight="700" fontSize="10.500" fill="#fff">X</text>
  </svg>
);
const RIcon = () => (
  <svg width="24" height="20">
    <ellipse cx="12" cy="8.500" rx="10" ry="6.800" fill="none" stroke="#a6a9b0" strokeWidth="3.600" />
    <text x="9" y="19.500" fontFamily="Open Sans" fontWeight="800" fontSize="18" fill="#2365b8">R</text>
  </svg>
);
const NotepadIcon = () => (
  <svg width="24" height="24">
    <path d="M18 2l5 1-3 19-5-1z" fill="#b9a98c" /><path d="M8 1l12 1-5 20.500L1 20z" fill="#7fc0cd" />
    <path d="M8 1l12 1-.8 3L7 3.800z" fill="#e8f4f6" /><path d="M1 20l6-7 9 5-1 4.500z" fill="#b3dbe3" />
    <path d="M9 1v2M12 1v2M15 1.500v2M18 1.500v2" stroke="#6b7f88" />
  </svg>
);
const ChromeIcon = () => (
  <svg width="26" height="26">
    <circle cx="12" cy="12" r="12" fill="#34a853" />
    <path d="M12 12L1.600 6A12 12 0 0 1 22.400 6z" fill="#e33b2e" /><path d="M12 12L22.400 6A12 12 0 0 1 12 24z" fill="#fbc116" />
    <circle cx="12" cy="12" r="6" fill="#fff" /><circle cx="12" cy="12" r="4.600" fill="#3b78e7" />
    <circle cx="18.500" cy="18.500" r="7.500" fill="#e9b8ad" /><path d="M12 21a7.500 7.500 0 0 0 14-1z" fill="#bfc7cc" />
    <path d="M17 21c0-4 1-6 2.500-6.500.5 2 0 5-1 7z" fill="#222" stroke="#fff" strokeWidth=".6" />
  </svg>
);
const CloudIcon = () => (
  <svg width="24" height="16">
    <defs><linearGradient id="cl" x1="0" y1="0" x2="0" y2="1"><stop offset="0" stopColor="#d6e6fb" /><stop offset="1" stopColor="#8db6f0" /></linearGradient></defs>
    <path d="M5 15.500a4.500 4.500 0 0 1-.6-9A7.500 7.500 0 0 1 18 5a5.300 5.300 0 0 1 1.500 10.500z" fill="url(#cl)" />
  </svg>
);

export default function App() {
  const cols = 'ABCDEFGHIJKLMNOPQRSTUVWXY'.split('');
  return (
    <Window>
      <Global />
      <TitleBar>
        <Slot $w={34} $ml={12}><SaveIcon /></Slot>
        <Slot $w={22} $ml={1}><UndoIcon /></Slot>
        <Slot $w={12}><Chevron c="#fff" /></Slot>
        <Slot $w={22} $ml={5}><UndoIcon c="#4d8f6b" flip /></Slot>
        <Slot $w={12}><Chevron c="#4d8f6b" /></Slot>
        <Slot $w={30}>
          <svg width="8" height="8" fill="none" stroke="#fff" strokeWidth="1.200"><path d="M0 1h8M1 4l3 2.700L7 4" /></svg>
        </Slot>
        <Slot $w={-0} $ml={-2} />
        <DocTitle>regresi.txt  -  Excel</DocTitle>
        <ContextTitle>Chart Tools</ContextTitle>
        <Spacer />
        <SignIn>Sign in</SignIn>
        <Slot $w={46}>
          <svg width="13" height="11" fill="none" stroke="#fff"><path d="M.5.5h12v10H.5zM.5 3h12M6.500 9V4.500M4.500 6.500l2-2 2 2" /></svg>
        </Slot>
        <Slot $w={46}><svg width="10" height="2"><path d="M0 .5h10" stroke="#fff" /></svg></Slot>
        <Slot $w={46}>
          <svg width="10" height="10" fill="none" stroke="#fff"><path d="M.5 2.500h7v7h-7zM2.500 2.500v-2h7v7h-2" /></svg>
        </Slot>
        <Slot $w={46}>
          <svg width="11" height="11" stroke="#fff"><path d="M.5.500l10 10M10.500.500l-10 10" /></svg>
        </Slot>
        <Slot $w={1} />
      </TitleBar>

      <TabRow>
        <Tab $w={51}><span>File</span></Tab>
        <Tab $w={65} $ls={0.4} $active><span>Home</span></Tab>
        <Tab $w={63}><span>Insert</span></Tab>
        <Tab $w={101} $ls={0.1}><span>Page Layout</span></Tab>
        <Tab $w={82}><span>Formulas</span></Tab>
        <Tab $w={56}><span>Data</span></Tab>
        <Tab $w={68}><span>Review</span></Tab>
        <Tab $w={55}><span>View</span></Tab>
        <Tab $w={55}><span>Help</span></Tab>
        <Tab $w={69} $ls={0.15} $green><span>Design</span></Tab>
        <Tab $w={82} $green><span>Format</span></Tab>
        <BulbSlot>
          <svg width="13" height="17" fill="none" stroke="#444" strokeWidth="1.100">
            <path d="M4 11.500C4 9.500 1 8.500 1 5.500a5.200 5.200 0 0 1 10.400 0c0 3-3 4-3 6zM4 13.500h4.500M4.700 15.500H8" />
          </svg>
        </BulbSlot>
        <Tab $w={200} $ls={0.12}>Tell me what you want to do</Tab>
        <Spacer />
        <ShareButton>
          <svg width="12" height="12" fill="none" stroke="#217346"><path d="M3 4.500H.5v7h9V8M3.500 9C4 5.500 5.500 4 8 4V1.500L11.500 5 8 8V6C6 6 4.500 7 3.500 9z" /></svg>
          Share
        </ShareButton>
      </TabRow>

      <Ribbon>
        <GroupBox $w={96}>
          <GroupBody>
            <BigButton $w={31} $ml={14} $off>
              <BigIcon $pt={2}><PasteIcon /></BigIcon>
              <BigLine>Paste</BigLine>
              <BigLine><Chevron c={OFF} /></BigLine>
            </BigButton>
            <Column $w={48}>
              <ToolRow $h={23} $pl={10}><CutIcon /></ToolRow>
              <ToolRow $h={24} $pl={8}><CopyIcon /><Slot $w={17}><Chevron /></Slot></ToolRow>
              <ToolRow $h={23} $pl={8}><PainterIcon /></ToolRow>
            </Column>
          </GroupBody>
          <GroupFoot><GroupName>Clipboard</GroupName><Slot $w={15}><Launcher /></Slot></GroupFoot>
        </GroupBox>

        <GroupBox $w={232}>
          <GroupBody>
            <Column>
              <ToolRow $h={39} $pl={8}>
                <Combo $w={123}>Calibri (Body)<Chevron /></Combo>
                <Slot $w={2} />
                <Combo $w={43}>10<Chevron /></Combo>
                <Slot $w={27}><GrowFont /></Slot>
                <Slot $w={24}><GrowFont down /></Slot>
              </ToolRow>
              <ToolRow $h={24} $pl={8}>
                <Slot $w={22}><Glyph $b $size={12.5}>B</Glyph></Slot>
                <Slot $w={25}><Glyph $i $size={15}>I</Glyph></Slot>
                <Slot $w={23}><Glyph $u $size={12.5}>U</Glyph></Slot>
                <Slot $w={12}><Chevron /></Slot>
                <Slot $w={14}><VRule $h={20} /></Slot>
                <Slot $w={20} $ml={-1}><BordersIcon /></Slot>
                <Slot $w={14}><Chevron c={OFF} /></Slot>
                <Slot $w={10}><VRule $h={20} /></Slot>
                <Slot $w={22} $ml={1}><FillIcon /></Slot>
                <Slot $w={12}><Chevron /></Slot>
                <Slot $w={22} $ml={5}><FontColorIcon /></Slot>
                <Slot $w={12}><Chevron /></Slot>
              </ToolRow>
            </Column>
          </GroupBody>
          <GroupFoot><GroupName>Font</GroupName><Slot $w={15}><Launcher /></Slot></GroupFoot>
        </GroupBox>

        <GroupBox $w={280}>
          <GroupBody>
            <Column $w={137}>
              <ToolRow $h={38} $pl={7}>
                <Slot $w={24}><Lines rows={[[0, 14, 0], [3, 11, 4], [0, 14, 8]]} /></Slot>
                <Slot $w={24}><Lines rows={[[0, 14, 2], [3, 11, 6], [0, 14, 10]]} /></Slot>
                <Slot $w={24}><Lines rows={[[0, 14, 5], [3, 11, 9], [0, 14, 13]]} /></Slot>
                <Slot $w={6}><VRule $h={20} /></Slot>
                <Slot $w={24}><OrientIcon /></Slot>
                <Slot $w={10}><Chevron c={OFF} /></Slot>
              </ToolRow>
              <ToolRow $h={25} $pl={7}>
                <Slot $w={24}><Lines rows={[[0, 14, 0], [0, 10, 4], [0, 14, 8], [0, 10, 12]]} /></Slot>
                <Slot $w={24}><Lines rows={[[0, 14, 0], [3, 11, 4], [0, 14, 8], [3, 11, 12]]} /></Slot>
                <Slot $w={24}><Lines rows={[[0, 14, 0], [5, 14, 4], [0, 14, 8], [5, 14, 12]]} /></Slot>
                <Slot $w={6}><VRule $h={20} /></Slot>
                <Slot $w={24}><IndentIcon /></Slot>
                <Slot $w={24}><IndentIcon right /></Slot>
              </ToolRow>
            </Column>
            <Column $pt={6}><VRule $h={59} /></Column>
            <Column>
              <ToolRow $h={39} $pl={7}>
                <Slot $w={19}><WrapIcon /></Slot>
                <ToolText $off $ls={-0.25}>Wrap Text</ToolText>
              </ToolRow>
              <ToolRow $h={24} $pl={6}>
                <Slot $w={17}><MergeIcon /></Slot>
                <Slot $w={3} />
                <ToolText $off $w={95}>Merge &amp; Center</ToolText>
                <Chevron c={OFF} />
              </ToolRow>
            </Column>
          </GroupBody>
          <GroupFoot><GroupName>Alignment</GroupName><Slot $w={15}><Launcher off /></Slot></GroupFoot>
        </GroupBox>

        <GroupBox $w={156}>
          <GroupBody>
            <Column>
              <ToolRow $h={39} $pl={8}><Combo $w={140} $off>General<Chevron c={OFF} /></Combo></ToolRow>
              <ToolRow $h={24} $pl={8}>
                <Slot $w={22}><Glyph $off $size={18}>$</Glyph></Slot>
                <Slot $w={12}><Chevron c={OFF} /></Slot>
                <Slot $w={32}><Glyph $off $size={18}>%</Glyph></Slot>
                <Slot $w={18}>
                  <svg width="9" height="14" fill={OFF}><path d="M4 0C6.500 0 8 1.800 8 4.500 8 9 5 12.500 2 13.500L1.500 12.500C3.500 11.500 5 9.500 5 7.800 2.500 8.500.5 6.500.5 4 .5 1.700 2 0 4 0z" /></svg>
                </Slot>
                <Slot $w={12}><VRule $h={20} /></Slot>
                <Slot $w={18}><DecimalIcon /></Slot>
                <Slot $w={18} $ml={6}><DecimalIcon dec /></Slot>
              </ToolRow>
            </Column>
          </GroupBody>
          <GroupFoot><GroupName>Number</GroupName><Slot $w={15}><Launcher off /></Slot></GroupFoot>
        </GroupBox>

        <GroupBox $w={194}>
          <GroupBody>
            <Slot $w={10} />
            <BigButton $w={70} $off>
              <BigIcon><CondIcon /></BigIcon>
              <BigLine>Conditional</BigLine>
              <BigLine>Formatting <Chevron c={OFF} s={6} /></BigLine>
            </BigButton>
            <BigButton $w={62} $off>
              <BigIcon><BrushTableIcon /></BigIcon>
              <BigLine>Format as</BigLine>
              <BigLine>Table <Chevron c={OFF} s={6} /></BigLine>
            </BigButton>
            <BigButton $w={42} $off>
              <BigIcon><BrushTableIcon cell /></BigIcon>
              <BigLine>Cell</BigLine>
              <BigLine>Styles <Chevron c={OFF} s={6} /></BigLine>
            </BigButton>
          </GroupBody>
          <GroupFoot><GroupName>Styles</GroupName></GroupFoot>
        </GroupBox>

        <GroupBox $w={143}>
          <GroupBody>
            <Slot $w={7} />
            <BigButton $w={43}>
              <BigIcon><InsertIcon /></BigIcon>
              <BigLine>Insert</BigLine>
              <BigLine><Chevron /></BigLine>
            </BigButton>
            <BigButton $w={41}>
              <BigIcon><DeleteIcon /></BigIcon>
              <BigLine>Delete</BigLine>
              <BigLine><Chevron /></BigLine>
            </BigButton>
            <BigButton $w={44}>
              <BigIcon><FormatIcon /></BigIcon>
              <BigLine>Format</BigLine>
              <BigLine><Chevron /></BigLine>
            </BigButton>
          </GroupBody>
          <GroupFoot><GroupName>Cells</GroupName></GroupFoot>
        </GroupBox>

        <GroupBox $w={200}>
          <GroupBody>
            <Column $w={100}>
              <ToolRow $h={20} $pl={10}>
                <Slot $w={19}><SigmaIcon /></Slot>
                <ToolText $off $w={61} $ls={0.15}>AutoSum</ToolText>
                <Chevron c={OFF} />
              </ToolRow>
              <ToolRow $h={25} $pl={10}>
                <Slot $w={19}><FillDownIcon /></Slot>
                <Slot $w={1} />
                <ToolText $off $w={18}>Fill</ToolText>
                <Chevron c={OFF} />
              </ToolRow>
              <ToolRow $h={23} $pl={10}>
                <Slot $w={19}><EraserIcon /></Slot>
                <Slot $w={1} />
                <ToolText $w={30} $ls={-0.1}>Clear</ToolText>
                <Chevron />
              </ToolRow>
            </Column>
            <BigButton $w={48} $off>
              <BigIcon><SortIcon /></BigIcon>
              <BigLine>Sort &amp;</BigLine>
              <BigLine>Filter <Chevron c={OFF} s={6} /></BigLine>
            </BigButton>
            <BigButton $w={39}>
              <BigIcon><FindIcon /></BigIcon>
              <BigLine>Find &amp;</BigLine>
              <BigLine>Select <Chevron s={6} /></BigLine>
            </BigButton>
          </GroupBody>
          <GroupFoot><GroupName>Editing</GroupName></GroupFoot>
        </GroupBox>
        <Collapse>
          <svg width="11" height="6" fill="none" stroke="#444" strokeWidth="1.300"><path d="M1 5.500L5.500 1 10 5.500" /></svg>
        </Collapse>
      </Ribbon>

      <MessageBar>
        <Slot $w={24} $ml={8}>
          <svg width="22" height="22">
            <circle cx="11" cy="11" r="10.200" fill="#fff" stroke="#2f86c0" strokeWidth="1.300" />
            <path d="M10 9h2v8h-2zM10 5h2v2h-2z" fill="#1b78c0" />
          </svg>
        </Slot>
        <MessageTitle>POSSIBLE DATA LOSS</MessageTitle>
        <MessageText>Some features might be lost if you save this workbook in the text (.txt) format. To preserve these features, save it in an Excel file format.</MessageText>
        <MessageButton $w={126}>Don't show again</MessageButton>
        <MessageButton $w={83}>Save As...</MessageButton>
        <Spacer />
        <Slot $w={30}><svg width="9" height="9" stroke="#555" strokeWidth="1.800"><path d="M1 1l7 7M8 1L1 8" /></svg></Slot>
      </MessageBar>

      <FormulaRow>
        <NameBox>Chart 2<svg width="8" height="5" fill="#666"><path d="M0 0h8L4 5z" /></svg></NameBox>
        <Slot $w={30} $h={26}>
          <svg width="3" height="12" fill="#aaa"><path d="M0 0h2v2H0zM0 4.500h2v2H0zM0 9h2v2H0z" /></svg>
        </Slot>
        <FormulaButtons>
          <Slot $w={36}><svg width="12" height="12" stroke="#c0c0c0" strokeWidth="1.600"><path d="M1 1l10 10M11 1L1 11" /></svg></Slot>
          <Slot $w={36}><svg width="14" height="12" fill="none" stroke="#c0c0c0" strokeWidth="2.400"><path d="M1 6.500l4 4L13 1" /></svg></Slot>
          <Slot $w={36}><FxMark>f<small>x</small></FxMark></Slot>
        </FormulaButtons>
        <FormulaInput><Chevron s={9} /></FormulaInput>
      </FormulaRow>

      <SheetArea>
        <GridPane>
          <HeadRow>
            <Corner><svg width="9" height="9" fill="#b2b2b2"><path d="M9 0v8.500H0z" /></svg></Corner>
            {cols.map((c) => <ColHead key={c}>{c}</ColHead>)}
          </HeadRow>
          {ROWS.map((r, i) => <GridRow key={i} row={r} n={i + 1} />)}
          <ChartFrame $x={514} $y={23}><ResidualChart /></ChartFrame>
          <ChartFrame $x={870} $y={25}><NormalChart /></ChartFrame>
          <ChartFrame $x={644} $y={205}><LineFitChart /></ChartFrame>
          <ChartButtons>
            <ChartButton><svg width="20" height="20" stroke="#2ea04b" strokeWidth="1"><path d="M9.500 -.5v21M-1 9.500h21" /></svg></ChartButton>
            <ChartButton>
              <svg width="24" height="22" fill="#fff" stroke="#444" strokeWidth="1.100">
                <path d="M22.500 1.500C17 4.500 12 9 9.500 13l3 3C17 12.500 21.500 7 22.500 1.500z" />
                <path d="M9.500 13c-5-.5-4 5.500-8.500 7 5 1.800 11.500.5 11.500-4z" fill="#83beec" stroke="#1f6fb5" />
              </svg>
            </ChartButton>
            <ChartButton>
              <svg width="22" height="22" fill="#f7f7f7" stroke="#444" strokeWidth="1.100"><path d="M.5.500h20v2.500L12.500 11.500v10h-4v-10L.5 3z" /></svg>
            </ChartButton>
          </ChartButtons>
        </GridPane>
        <VScroll>
          <ScrollButton><svg width="8" height="5" fill="#666"><path d="M0 5h8L4 0z" /></svg></ScrollButton>
          <VThumb />
          <Track />
          <ScrollButton><svg width="8" height="5" fill="#666"><path d="M0 0h8L4 5z" /></svg></ScrollButton>
        </VScroll>
      </SheetArea>

      <SheetTabs>
        <Slot $w={28} $ml={15}><svg width="5" height="8" fill="#bdbdbd"><path d="M5 0v8L0 4z" /></svg></Slot>
        <Slot $w={28}><svg width="5" height="8" fill="#bdbdbd"><path d="M0 0v8l5-4z" /></svg></Slot>
        <Slot $w={29} />
        <ActiveSheet>Sheet1</ActiveSheet>
        <OtherSheet>regresi</OtherSheet>
        <Slot $w={82} $h={26}>
          <svg width="17" height="17" fill="none" stroke="#777"><circle cx="8.500" cy="8.500" r="7.700" /><path d="M8.500 4.500v8M4.500 8.500h8" strokeWidth="1.800" /></svg>
        </Slot>
        <Spacer />
        <Slot $w={30}><svg width="3" height="12" fill="#aaa"><path d="M0 0h2v2H0zM0 4.500h2v2H0zM0 9h2v2H0z" /></svg></Slot>
        <HScroll>
          <ScrollButton><svg width="5" height="8" fill="#666"><path d="M5 0v8L0 4z" /></svg></ScrollButton>
          <HThumb />
          <Track />
          <ScrollButton><svg width="5" height="8" fill="#666"><path d="M0 0v8l5-4z" /></svg></ScrollButton>
        </HScroll>
      </SheetTabs>

      <StatusBar>
        <StatusText $w={762} $ml={8} $ls={0}>Ready</StatusText>
        <StatusText $w={126}>Average: 0.477304314</StatusText>
        <StatusText $w={60} $ls={0}>Count: 2</StatusText>
        <StatusText $w={110}>Sum: 0.477304314</StatusText>
        <ViewButton $on>
          <svg width="14" height="13" fill="none" stroke="#444"><path d="M.5.5h12v12H.5zM.5 4.500h12M.5 8.500h12M4.500.5v12M8.500.5v12" /></svg>
        </ViewButton>
        <ViewButton>
          <svg width="14" height="13" fill="none" stroke="#444"><path d="M.5.5h13v12H.5zM3.500 2.500h7v8h-7zM5 4.500h4M5 6.500h4M5 8.500h4" /></svg>
        </ViewButton>
        <ViewButton>
          <svg width="14" height="13" fill="none" stroke="#444"><path d="M.5.5h13v12H.5zM.5 8.500h8.500v-8M4.500.5v8" /></svg>
        </ViewButton>
        <Slot $w={127} $ml={5}>
          <svg width="127" height="12">
            <path d="M1 5.500h8M118 5.500h8M122 1.500v8" stroke="#444" />
            <path d="M14 6.500h100M64.500 4v5" stroke="#a19f9d" />
            <path d="M54 1h5v11h-5z" fill="#777" />
          </svg>
        </Slot>
        <Slot $w={40} $ml={4}>85%</Slot>
      </StatusBar>

      <Taskbar>
        <Slot $w={48}><WinIcon /></Slot>
        <SearchBox>
          <svg width="17" height="17" fill="none" stroke="#222" strokeWidth="1.300"><circle cx="10.500" cy="6.500" r="5.500" /><path d="M6.500 10.500L.5 16.500" /></svg>
          Type here to search
        </SearchBox>
        <TaskSlot $w={48}><TaskViewIcon /></TaskSlot>
        <TaskSlot $w={53}><EdgeIcon /></TaskSlot>
        <TaskSlot $w={47}><StoreIcon /></TaskSlot>
        <TaskSlot $w={50} $open><FolderIcon /></TaskSlot>
        <TaskSlot $w={48}><MailIcon /></TaskSlot>
        <TaskSlot $w={49}><StudioIcon /></TaskSlot>
        <TaskSlot $w={50}><CalcIcon /></TaskSlot>
        <TaskSlot $w={48} $active><ExcelIcon /></TaskSlot>
        <TaskSlot $w={49} $open><RIcon /></TaskSlot>
        <TaskSlot $w={49} $open><NotepadIcon /></TaskSlot>
        <TaskSlot $w={49} $open><ChromeIcon /></TaskSlot>
        <Spacer />
        <Slot $w={24}><CloudIcon /></Slot>
        <Temp>26°C</Temp>
        <Slot $w={26}><svg width="13" height="8" fill="none" stroke="#fff" strokeWidth="1.300"><path d="M1 7l5.500-5.500L12 7" /></svg></Slot>
        <Slot $w={24}>
          <svg width="13" height="16" fill="none" stroke="#fff"><path d="M1.500 4.500h7v7h-7zM8.500 7l3-1.500v5L8.500 9M2 2.500C3.500.5 7 .5 8.500 2.500M2 13.500c1.500 2 5 2 6.500 0" /></svg>
        </Slot>
        <Slot $w={25}>
          <svg width="14" height="13" fill="none" stroke="#fff" strokeWidth="1.100">
            <path d="M1 12.500C1 6 6 1 12.500 1M4 12.500C4 8 8 4 12.500 4M7 12.500C7 9.500 9.500 7 12.500 7" />
            <circle cx="11.500" cy="11.500" r="1.300" fill="#fff" />
          </svg>
        </Slot>
        <Slot $w={21}>
          <svg width="17" height="16" fill="none" stroke="#fff"><path d="M.7 5H3l3.500-3.500v11L3 9.500H.7zM8.500 4c1 1 1 2 1 3" /><circle cx="12" cy="11" r="4.700" fill="#d92c33" stroke="none" /><path d="M10 9l4 4M14 9l-4 4" strokeWidth="1.300" /></svg>
        </Slot>
        <Slot $w={35}>
          <svg width="24" height="13" fill="none" stroke="#fff"><path d="M.5.5h22v12H.5z" /><path d="M3 4h17M4 6.500h16" strokeDasharray="1.500 1" /><path d="M6 9.500h12" /></svg>
        </Slot>
        <Clock><span>12:04 PM</span><span>12/12/2022</span></Clock>
        <Slot $w={44} $ml={5}>
          <svg width="26" height="25">
            <path d="M0 1h17v13H8l-3.500 4v-4H0z" fill="#fff" />
            <path d="M3 4.500h11M3 7.500h11M3 10.500h8" stroke="#1a2540" />
            <circle cx="16" cy="16.500" r="7.800" fill="#333a44" stroke="#8a929c" />
            <text x="16" y="20.500" textAnchor="middle" fontFamily="Open Sans" fontSize="11.500" fill="#fff">1</text>
          </svg>
        </Slot>
        <Slot $w={1}><svg width="1" height="40"><path d="M0 0h1v40H0z" fill="#6c7480" /></svg></Slot>
        <Slot $w={4} />
      </Taskbar>
    </Window>
  );
}
